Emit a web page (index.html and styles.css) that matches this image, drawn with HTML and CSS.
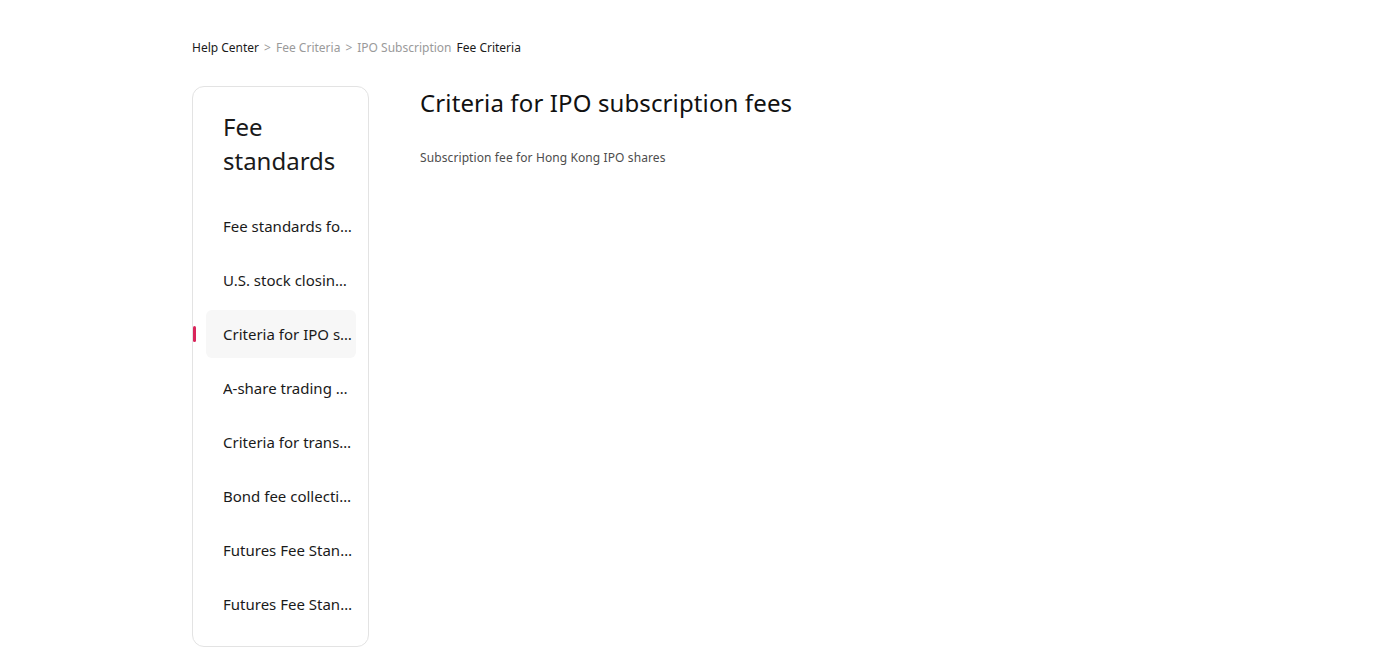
FILE: index.html
```html
<!DOCTYPE html>
<html lang="en">
<head>
<meta charset="utf-8">
<title>Criteria for IPO subscription fees</title>
<link rel="stylesheet" href="styles.css">
</head>
<body>
<div class="page">
  <nav class="crumbs">
    <a class="crumb crumb-home" href="#">Help Center</a>
    <span class="sep">&gt;</span>
    <a class="crumb" href="#">Fee Criteria</a>
    <span class="sep">&gt;</span>
    <a class="crumb" href="#">IPO Subscription</a>
    <span class="crumb-current">Fee Criteria</span>
  </nav>
  <div class="layout">
    <aside class="sidebar">
      <h2 class="side-title">Fee standards</h2>
      <ul class="menu">
        <li class="item"><span class="label">Fee standards for Hong Kong stocks</span></li>
        <li class="item"><span class="label">U.S. stock closing fees</span></li>
        <li class="item active"><span class="label">Criteria for IPO subscription fees</span></li>
        <li class="item"><span class="label">A-share trading fees</span></li>
        <li class="item"><span class="label">Criteria for transfer fees</span></li>
        <li class="item"><span class="label">Bond fee collection standards</span></li>
        <li class="item"><span class="label">Futures Fee Standards</span></li>
        <li class="item"><span class="label">Futures Fee Standards (Options)</span></li>
      </ul>
    </aside>
    <main class="content">
      <h1 class="title">Criteria for IPO subscription fees</h1>
      <p class="subtitle">Subscription fee for Hong Kong IPO shares</p>
    </main>
  </div>
</div>
</body>
</html>
```
FILE: styles.css
```css
* { box-sizing: border-box; }
html, body { margin: 0; padding: 0; background: #fff; }
body {
  font-family: "Noto Sans", "Open Sans", sans-serif;
  color: #1a1a1a;
}
.page {
  width: 1003px;
  margin: 0 auto;
  padding-top: 39px;
}
.crumbs {
  font-size: 12px;
  line-height: 18px;
  height: 18px;
  display: flex;
  align-items: center;
  gap: 5px;
  white-space: nowrap;
}
.crumb { color: #9a9a9a; text-decoration: none; }
.crumb-home { color: #1a1a1a; }
.sep { color: #9a9a9a; }
.crumb-current { color: #1a1a1a; }
.layout {
  display: flex;
  align-items: flex-start;
  gap: 51px;
  margin-top: 29px;
}
.sidebar {
  width: 177px;
  flex: none;
  border: 1px solid #e3e3e3;
  border-radius: 12px;
  padding: 23px 12px 18px 13px;
}
.side-title {
  margin: 0 0 24px 17px;
  font-size: 24px;
  line-height: 34px;
  font-weight: 400;
  color: #1a1a1a;
}
.menu {
  list-style: none;
  margin: 0;
  padding: 0;
  display: flex;
  flex-direction: column;
  gap: 6px;
}
.item {
  position: relative;
  height: 48px;
  display: flex;
  align-items: center;
  padding: 0 4px 0 17px;
  border-radius: 6px;
  font-size: 15px;
  color: #1a1a1a;
}
.label {
  overflow: hidden;
  white-space: nowrap;
  text-overflow: ellipsis;
}
.item.active { background: #f7f7f7; }
.item.active::before {
  content: "";
  position: absolute;
  left: -13px;
  top: 16px;
  width: 3px;
  height: 16px;
  border-radius: 2px;
  background: #d9255b;
}
.content { flex: 1; }
.title {
  margin: 0;
  font-size: 24px;
  line-height: 34px;
  font-weight: 400;
  letter-spacing: 0.12px;
  color: #111;
}
.subtitle {
  margin: 29px 0 0;
  font-size: 12px;
  line-height: 18px;
  letter-spacing: 0.1px;
  color: #4d4d4d;
}
```
